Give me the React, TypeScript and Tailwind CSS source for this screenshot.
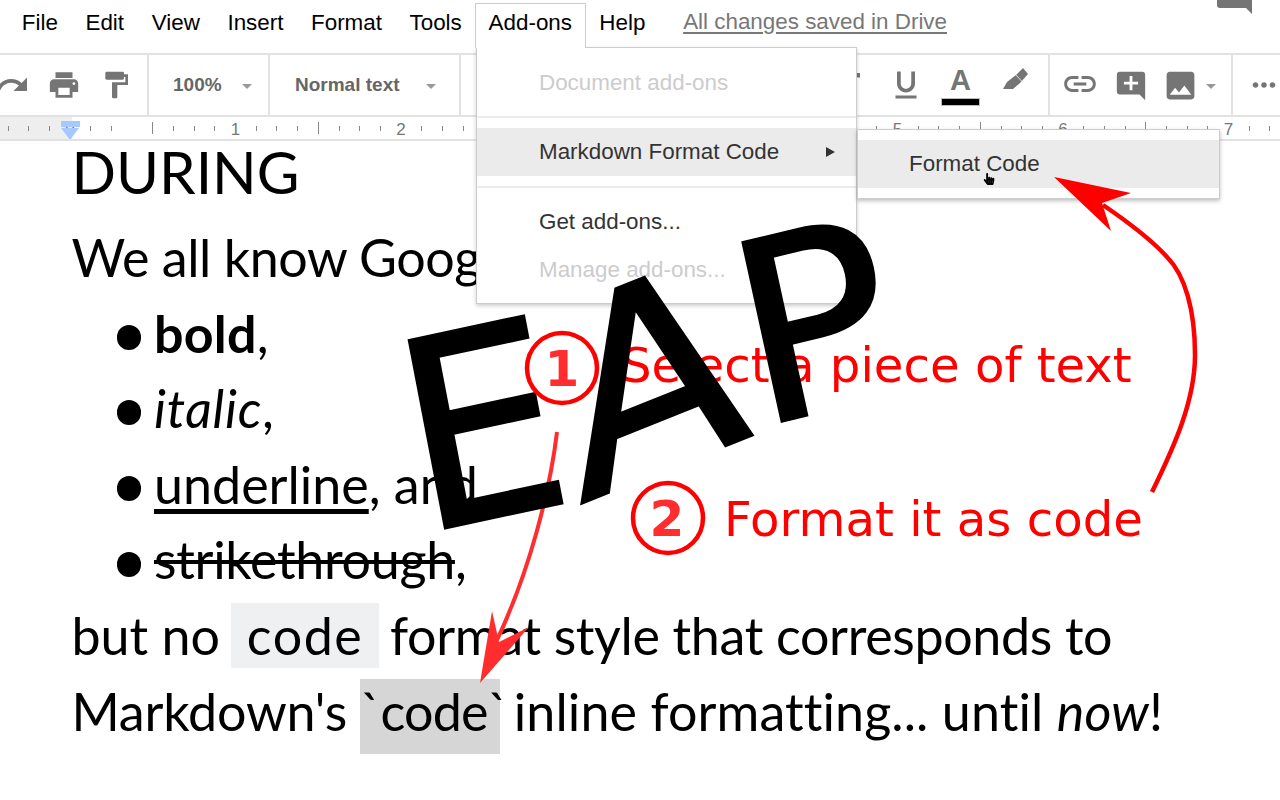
import {
  MdRedo,
  MdPrint,
  MdFormatPaint,
  MdFormatItalic,
  MdFormatUnderlined,
  MdLink,
  MdAddComment,
  MdImage,
  MdMoreHoriz,
} from "react-icons/md";
import { FaHandPointer } from "react-icons/fa";

const menus = ["File", "Edit", "View", "Insert", "Format", "Tools"];
// ruler ticks, one cell per eighth of an inch, 0 sits on the first inch mark
const ticks = Array.from({ length: 62 }, (_, i) => i - 7);

function Caret() {
  return <span className="block w-0 h-0 border-x-[5px] border-x-transparent border-t-[5px] border-t-[#999]" />;
}

function Divider() {
  return <span className="block w-[2px] h-full bg-[#e2e2e2] shrink-0" />;
}

function Toolbar() {
  return (
    <div className="flex h-[62px] border-b-2 border-[#e2e2e2] text-[#757575] overflow-hidden">
      <div className="flex items-center w-[147px] shrink-0 -ml-[14px] box-content pl-0">
        <span className="w-[52px] flex justify-center shrink-0"><MdRedo size={36} /></span>
        <span className="w-[52px] flex justify-center shrink-0"><MdPrint size={34} /></span>
        <span className="w-[52px] flex justify-center shrink-0"><MdFormatPaint size={32} /></span>
      </div>
      <span className="block w-[2px] h-full bg-[#e2e2e2] shrink-0 ml-[14px]" />
      <div className="flex items-center w-[119px] shrink-0 pl-[24px] font-bold text-[19px] text-[#666]">
        100%
        <span className="ml-[20px] mt-[3px]"><Caret /></span>
      </div>
      <Divider />
      <div className="flex items-center w-[189px] shrink-0 pl-[25px] font-bold text-[19px] text-[#666]">
        Normal text
        <span className="ml-[26px] mt-[3px]"><Caret /></span>
      </div>
      <Divider />
      <div className="flex items-center justify-end w-[587px] shrink-0 pr-[5px]">
        <span className="w-[55px] flex justify-center"><MdFormatItalic size={36} /></span>
        <span className="w-[55px] flex justify-center"><MdFormatUnderlined size={36} /></span>
        <span className="w-[55px] flex flex-col items-center">
          <span className="font-['Liberation_Sans',sans-serif] font-bold text-[29px] leading-[30px]">A</span>
          <span className="block w-[39px] h-[8px] mt-[3px] bg-black border border-[#bbb]" />
        </span>
        <span className="w-[55px] flex justify-center">
          <svg width="30" height="30" viewBox="0 0 30 30" className="-mt-[6px]" fill="currentColor">
            <path d="M22 1 L27 7 L19 16 L12 22 L2 22 L6 15 L15 8 Z" />
            <path d="M13.5 6.5 L21.5 15" stroke="#fff" strokeWidth="0.8" />
          </svg>
        </span>
      </div>
      <Divider />
      <div className="flex items-center w-[181px] shrink-0 pl-[9px]">
        <span className="w-[40px] flex justify-center ml-[1px]"><MdLink size={38} className="-mt-[2px]" /></span>
        <span className="w-[40px] flex justify-center ml-[11px]"><MdAddComment size={34} className="mt-[1px]" /></span>
        <span className="w-[40px] flex justify-center ml-[9px]"><MdImage size={37} /></span>
        <span className="ml-[6px] mt-[3px]"><Caret /></span>
      </div>
      <Divider />
      <div className="flex items-center pl-[14px]"><MdMoreHoriz size={34} /></div>
    </div>
  );
}

function Ruler() {
  return (
    <div className="relative h-[24px] border-b-2 border-[#e2e2e2] overflow-hidden">
      <div className="absolute left-0 top-0 w-[72px] h-[22px] bg-[#eeeeee]" />
      <div className="relative flex h-[22px] -ml-[2.35px]">
        {ticks.map((t) => {
          const pos = ((t % 8) + 8) % 8;
          return (
            <span key={t} className="w-[20.7px] shrink-0 flex items-center justify-center">
              {t === -1 ? null : pos === 0 ? (
                <span className="block w-[1px] h-[12px] bg-[#888]" />
              ) : pos === 4 ? (
                <span className="font-['Liberation_Sans',sans-serif] text-[17px] leading-none text-[#777] mt-[3px]">{t / 8 + 0.5}</span>
              ) : (
                <span className="block w-[1px] h-[5px] bg-[#888]" />
              )}
            </span>
          );
        })}
      </div>
      <div className="absolute left-[61px] top-[4px] w-[19px]">
        <div className="h-[6px] bg-[#a6c8ff]" />
        <div className="w-0 h-0 mt-[1px] border-x-[9.5px] border-x-transparent border-t-[12px] border-t-[#a6c8ff]" />
      </div>
    </div>
  );
}

function Bullet({ children }: { children: React.ReactNode }) {
  return (
    <div className="flex items-center h-[75.6px] pl-[117px]">
      <span className="block w-[24px] h-[25px] rounded-full bg-black mr-[13px] mt-[8px] shrink-0" />
      <span>{children}</span>
    </div>
  );
}

function Document() {
  return (
    <div className="pl-[71.5px] font-['Lato',sans-serif] text-[52px] leading-[75.6px] text-black whitespace-nowrap">
      <div className="text-[58.5px] leading-[64px] -mt-[2px] mb-[17px]">DURING</div>
      <div className="h-[75.6px] tracking-[-0.45px]">We all know Google Docs has</div>
      <div className="-ml-[71.5px]">
        <Bullet><b className="tracking-[0.2px]">bold</b>,</Bullet>
        <Bullet><i className="tracking-[0.7px]">italic</i>,</Bullet>
        <Bullet><span className="underline decoration-[5px] underline-offset-[5px]">underline</span>, and</Bullet>
        <Bullet><span className="line-through decoration-[4px] tracking-[-0.3px]">strikethrough</span>,</Bullet>
      </div>
      <div className="h-[75.6px]">
        but no
        <span className="inline-block w-[148px] mx-[11px] bg-[#eff0f1] text-center tracking-[1.5px] leading-[60px] pt-[2px] pb-[3px]">code</span>
        <span className="tracking-[-0.35px]">format style that corresponds to</span>
      </div>
      <div className="h-[75.6px]">
        <span className="tracking-[-0.2px]">Markdown's</span>{" "}
        <span className="inline-block w-[140px] bg-[#d6d6d6] text-center tracking-[-0.8px] leading-[60px] pt-[2px] pb-[13px]">`code`</span>{" "}
        <span className="tracking-[0.1px]">inline formatting... until <i>now</i>!</span>
      </div>
    </div>
  );
}

function AddonsMenu() {
  return (
    <div className="absolute left-[476px] top-[47px] w-[381px] z-20 bg-white border border-[#ccc] shadow-[0_2px_4px_rgba(0,0,0,0.2)] py-[10px] text-[22.4px] text-[#333]">
      <div className="h-[48px] pl-[62px] pt-[2px] flex items-center text-[#ccc]">Document add-ons</div>
      <div className="h-[2px] my-[10px] bg-[#ebebeb]" />
      <div className="h-[48px] pl-[62px] pr-[21px] flex items-center justify-between bg-[#ebebeb]">
        Markdown Format Code
        <span className="block w-0 h-0 border-y-[5px] border-y-transparent border-l-[9px] border-l-[#333]" />
      </div>
      <div className="h-[2px] mt-[10px] mb-[9px] bg-[#ebebeb]" />
      <div className="h-[48px] pl-[62px] pt-[2px] flex items-center">Get add-ons...</div>
      <div className="h-[48px] pl-[62px] pt-[2px] flex items-center text-[#ccc]">Manage add-ons...</div>
    </div>
  );
}

function Submenu() {
  return (
    <div className="absolute left-[857px] top-[129px] w-[363px] z-20 bg-white border border-[#ccc] shadow-[0_2px_4px_rgba(0,0,0,0.25)] py-[10px] text-[22.4px] text-[#333]">
      <div className="relative h-[48px] pl-[51px] flex items-center bg-[#ebebeb]">
        Format Code
        <FaHandPointer size={12} className="absolute left-[125px] top-[33px] text-black" />
      </div>
    </div>
  );
}

function Annotations() {
  return (
    <svg width="1280" height="800" viewBox="0 0 1280 800" className="absolute left-0 top-0 z-30 pointer-events-none">
      <g fontFamily="'DejaVu Sans', sans-serif" fill="#ff0000" fontSize="48.2">
        <text x="621" y="382">Select a piece of text</text>
        <text x="724" y="536">Format it as code</text>
      </g>
      {/* curved arrows */}
      <path d="M557 432 C550 490 530 570 497 640" fill="none" stroke="#ff2d2d" strokeWidth="4" />
      <polygon points="480,683 492,611 499,642 529,627" fill="#ff2d2d" />
      <path d="M1152 492 C1175 445 1195 400 1195 355 C1195 310 1185 275 1167 257 C1150 238 1125 220 1103 205" fill="none" stroke="#ff0000" strokeWidth="4.5" />
      <polygon points="1054,177 1131,193 1102,203 1111,231" fill="#ff0000" />
      {/* EAP stamp */}
      <g fontFamily="'DejaVu Sans', sans-serif" fontSize="100" fill="#000" stroke="#000" strokeWidth="1.2">
        <text transform="matrix(2.48 -0.53 0.494 2.57 421 533)">E</text>
        <text transform="matrix(2.545 -1.018 0.508 2.55 580 503.8)">A</text>
        <text transform="matrix(2.5 -0.6 0.535 2.45 757.5 427)">P</text>
      </g>
      {/* numbered circles */}
      <circle cx="562" cy="368" r="35" fill="none" stroke="#ff0000" strokeWidth="4.5" />
      <circle cx="668" cy="518" r="35" fill="none" stroke="#ff0000" strokeWidth="4.5" />
      <g fontFamily="'DejaVu Sans', sans-serif" fontWeight="bold" fontSize="50" fill="#ff2d2d" textAnchor="middle">
        <text x="562" y="386">1</text>
        <text x="667" y="536">2</text>
      </g>
    </svg>
  );
}

export default function App() {
  return (
    <div className="relative w-[1280px] h-[800px] overflow-hidden bg-white font-['Liberation_Sans',sans-serif]">
      <div className="relative flex items-start h-[55px] border-b-2 border-[#e2e2e2] pl-[8px] text-[22.4px] text-black">
        {menus.map((m) => (
          <span key={m} className="px-[13.8px] leading-[46px]">{m}</span>
        ))}
        <span className="relative z-30 mt-[3px] h-[45px] px-[12.5px] -ml-[0.5px] bg-white border border-b-0 border-[#ccc] leading-[38px]">Add-ons</span>
        <span className="px-[13.8px] leading-[46px]">Help</span>
        <span className="ml-[24px] leading-[44px] text-[#777] underline underline-offset-[3px]">All changes saved in Drive</span>
        <svg width="35" height="14" viewBox="0 0 35 14" className="ml-auto mr-[28px]" fill="#757575">
          <path d="M0 0H35V14L29 8H3Q0 8 0 5Z" />
        </svg>
      </div>
      <Toolbar />
      <Ruler />
      <Document />
      <AddonsMenu />
      <Submenu />
      <Annotations />
    </div>
  );
}
